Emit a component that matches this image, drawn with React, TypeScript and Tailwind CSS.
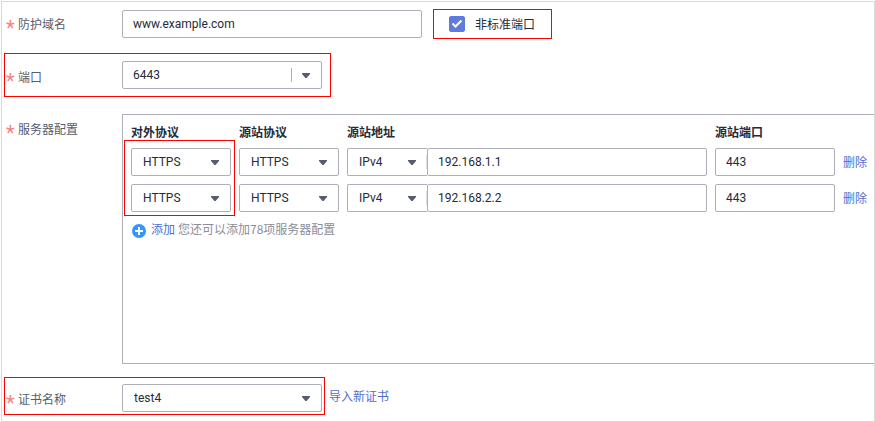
import type { ReactNode } from "react";

const field =
  "h-7 rounded-xs border border-[#adb0b8] bg-white font-[Roboto,'Noto_Sans_CJK_SC',sans-serif] text-[12px] text-[#252b3a] outline-none";

type SelectProps = {
  id?: string;
  label?: string;
  value: string;
  width: string;
  split?: boolean;
  joined?: boolean;
};

function Select({ id, label, value, width, split, joined }: SelectProps) {
  return (
    <div className={`grid shrink-0 items-center ${width}`}>
      <select
        id={id}
        aria-label={label}
        defaultValue={value}
        className={`col-start-1 row-start-1 w-full appearance-none ${field} ${split ? "px-[10px]" : "px-[11px]"} ${
          joined ? "rounded-r-none border-r-0" : ""
        }`}
      >
        <option>{value}</option>
      </select>
      <span
        className={`pointer-events-none col-start-1 row-start-1 flex h-[14px] items-center justify-self-end ${
          split ? "mr-3 border-l border-[#adb0b8] pl-[10px]" : joined ? "border-r border-[#dfe1e6] pr-[10px]" : "mr-3"
        }`}
      >
        <svg width="8" height="5" viewBox="0 0 8 5" fill="#575d6c" aria-hidden="true">
          <path d="M0 0h8v1L4.600 5H3.400L0 1z" />
        </svg>
      </span>
    </div>
  );
}

function Label({ htmlFor, children }: { htmlFor?: string; children: ReactNode }) {
  const body = (
    <>
      <span className="h-[18px] w-3 font-[Roboto,sans-serif] text-[20px] leading-[26px] text-[#f7827d]">*</span>
      <span>{children}</span>
    </>
  );
  const style = "flex w-[116px] shrink-0 leading-[18px] text-[#575d6c]";
  return htmlFor ? (
    <label htmlFor={htmlFor} className={style}>
      {body}
    </label>
  ) : (
    <div className={style}>{body}</div>
  );
}

const servers = [
  { id: 1, address: "192.168.1.1" },
  { id: 2, address: "192.168.2.2" },
];

export default function App() {
  return (
    <main className="mt-px ml-px border border-[#d9d9d9] bg-white pt-[7px] pb-[6px] font-['Noto_Sans_CJK_SC',sans-serif] text-[12px] text-[#252b3a]">
      <div className="flex items-center pl-1">
        <Label htmlFor="domain">防护域名</Label>
        <input id="domain" defaultValue="www.example.com" className={`w-[300px] px-[10px] ${field}`} />
        <label className="ml-[11px] flex h-[30px] items-center gap-[10px] border border-[#f00] pr-4 pl-[15px] leading-[18px]">
          <span className="grid">
            <input
              type="checkbox"
              defaultChecked
              className="peer col-start-1 row-start-1 size-4 appearance-none rounded-xs border border-[#adb0b8] checked:border-[#5e7ce0] checked:bg-[#5e7ce0]"
            />
            <svg
              className="pointer-events-none invisible col-start-1 row-start-1 peer-checked:visible"
              width="16"
              height="16"
              viewBox="0 0 16 16"
              fill="none"
              stroke="#fff"
              strokeWidth="2"
              aria-hidden="true"
            >
              <path d="M3.500 7.500L6.500 10.500L12.500 4.500" />
            </svg>
          </span>
          非标准端口
        </label>
      </div>

      <div className="mt-[14px] ml-[2px] flex w-[327px] border border-[#f00] py-[7px] pl-px">
        <div className="pt-[7px]">
          <Label htmlFor="port">端口</Label>
        </div>
        <Select id="port" value="6443" width="w-[200px]" split />
      </div>

      <section className="mt-[17px] flex pl-1" aria-label="服务器配置">
        <div className="pt-[6px]">
          <Label>服务器配置</Label>
        </div>
        <div className="relative min-h-[250px] grow border border-r-0 border-[#adb0b8] pr-[7px] pl-2">
          <table className="w-full table-fixed">
            <colgroup>
              <col className="w-[108px]" />
              <col className="w-[108px]" />
              <col />
              <col className="w-[128px]" />
              <col className="w-6" />
            </colgroup>
            <thead>
              <tr className="text-left leading-[18px]">
                <th className="pt-2 pb-[7px]">对外协议</th>
                <th className="pt-2 pb-[7px]">源站协议</th>
                <th className="pt-2 pb-[7px]">源站地址</th>
                <th className="pt-2 pb-[7px]">源站端口</th>
                <td />
              </tr>
            </thead>
            <tbody>
              {servers.map((s) => (
                <tr key={s.id}>
                  <td className="pb-2">
                    <Select label="对外协议" value="HTTPS" width="w-[100px]" />
                  </td>
                  <td className="pb-2">
                    <Select label="源站协议" value="HTTPS" width="w-[100px]" />
                  </td>
                  <td className="pr-2 pb-2">
                    <div className="flex">
                      <Select label="地址类型" value="IPv4" width="w-20" joined />
                      <input
                        aria-label="源站地址"
                        defaultValue={s.address}
                        className={`min-w-0 grow px-[10px] ${field}`}
                      />
                    </div>
                  </td>
                  <td className="pr-2 pb-2">
                    <input
                      aria-label="源站端口"
                      defaultValue="443"
                      className={`block w-full px-[10px] ${field}`}
                    />
                  </td>
                  <td className="pb-2">
                    <a href="#delete" className="whitespace-nowrap text-[#526ecc]">
                      删除
                    </a>
                  </td>
                </tr>
              ))}
            </tbody>
          </table>
          <div className="flex gap-[3px] leading-[18px]">
            <button type="button" className="flex gap-[5px] text-[#526ecc]">
              <svg className="mt-1 ml-px" width="14" height="14" viewBox="0 0 14 14" aria-hidden="true">
                <circle cx="7" cy="7" r="7" fill="#3296fa" />
                <path d="M7 3v8M3 7h8" stroke="#fff" strokeWidth="2" />
              </svg>
              添加
            </button>
            <span className="text-[#8a8e99]">您还可以添加78项服务器配置</span>
          </div>
          <div className="pointer-events-none absolute top-[25px] left-px h-[76px] w-[111px] border border-[#f00]" />
        </div>
      </section>

      <div className="mt-[13px] flex pl-[2px]">
        <div className="flex w-[321px] border border-[#f00] pt-[6px] pb-[2px] pl-px">
          <div className="pt-[6px]">
            <Label htmlFor="cert">证书名称</Label>
          </div>
          <Select id="cert" value="test4" width="w-[200px]" />
        </div>
        <a href="#import" className="mt-[10px] ml-1 leading-[18px] text-[#526ecc]">
          导入新证书
        </a>
      </div>
    </main>
  );
}
